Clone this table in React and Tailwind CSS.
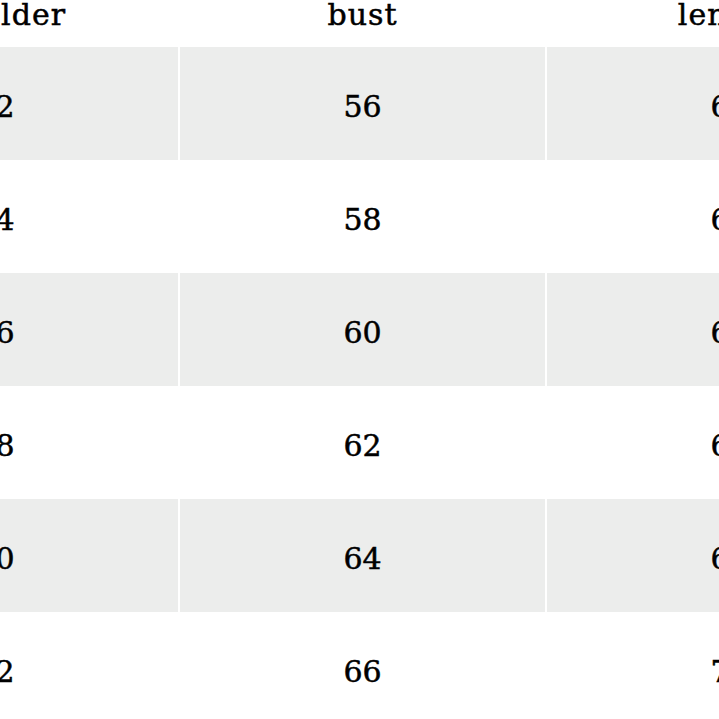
const rows = [
  ['32', '56', '60'],
  ['34', '58', '62'],
  ['36', '60', '64'],
  ['38', '62', '66'],
  ['40', '64', '68'],
  ['42', '66', '70'],
]

const headers = ['shoulder', 'bust', 'length']

export default function App() {
  return (
    <div className="w-[719px] h-[719px] overflow-hidden bg-white">
      <div
        className="-ml-[187px] w-[1099px] text-black text-[30px] [-webkit-text-stroke:0.5px_black]"
        style={{ fontFamily: '"DejaVu Serif", "Liberation Serif", serif' }}
      >
        {/* header */}
        <div className="grid grid-cols-[365px_365px_365px] gap-x-[2px] h-[47px]">
          {headers.map((h) => (
            <div key={h} className="text-center leading-[29px] tracking-[1px]">
              {h}
            </div>
          ))}
        </div>

        {/* body rows */}
        {rows.map((r, i) => (
          <div
            key={i}
            className="grid grid-cols-[365px_365px_365px] gap-x-[2px] h-[113px]"
          >
            {r.map((v, j) => (
              <div
                key={j}
                className={`text-center pt-[45px] leading-[30px] ${
                  i % 2 === 0 ? 'bg-[#ecedec]' : 'bg-white'
                }`}
              >
                {v}
              </div>
            ))}
          </div>
        ))}
      </div>
    </div>
  )
}
